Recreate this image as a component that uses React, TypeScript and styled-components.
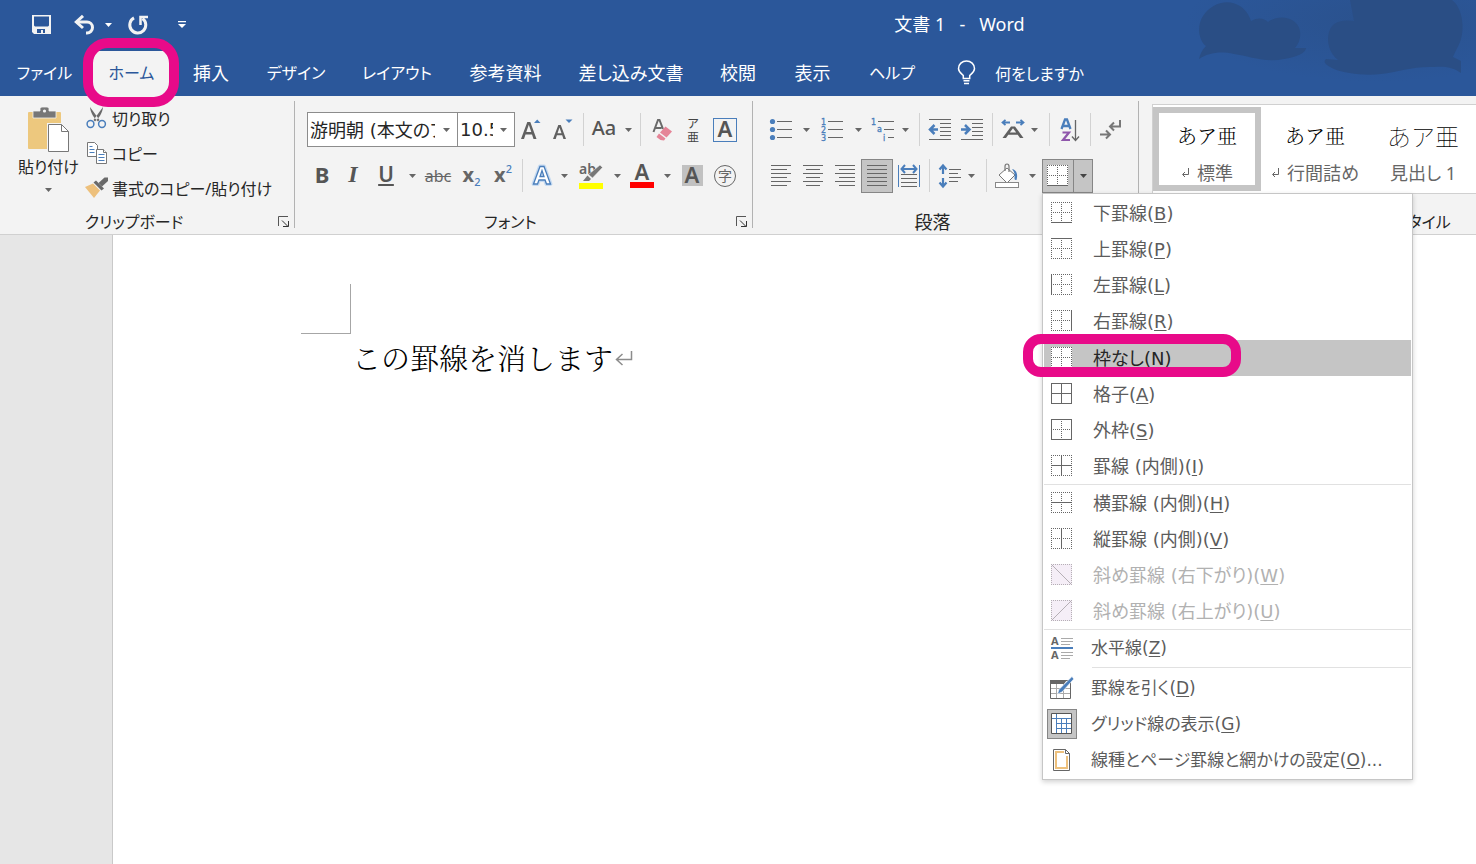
import React from "react";
import styled, { createGlobalStyle, css } from "styled-components";

const BLUE = "#2b579a";
const PINK = "#e80a89";
const ACCENT = "#4a7ebb";
const INK = "#666";

const Global = createGlobalStyle`
  * { box-sizing: border-box; }
  html, body, #root { height: 100%; }
  body {
    margin: 0;
    overflow: hidden;
    background: #fff;
    font-family: "Noto Sans", "Noto Sans CJK JP", sans-serif;
    font-size: 18px;
    font-feature-settings: "palt";
    color: #262626;
  }
  button, input {
    font: inherit;
    font-feature-settings: inherit;
    color: inherit;
    background: none;
    border: 0;
    padding: 0;
    margin: 0;
  }
  svg { display: block; flex: none; overflow: visible; }
`;

const Shell = styled.div`
  min-height: 100%;
  display: flex;
  flex-direction: column;
  overflow: hidden;
`;

/* ---------- header ---------- */

const Header = styled.header`
  position: relative;
  z-index: 2;
  background: ${BLUE};
  color: #fff;
`;

const Clouds = styled.svg`
  position: absolute;
  top: 0;
  right: 0;
  overflow: hidden;
`;

const TitleBar = styled.div`
  display: flex;
  align-items: center;
  height: 49px;
`;

const QuickAccess = styled.div`
  display: flex;
  align-items: center;
  padding-left: 17px;
  width: 200px;
`;

const Title = styled.h1`
  flex: 1;
  margin: 0;
  padding: 0 0 2px 243px;
  text-align: center;
  font-size: 18px;
  font-weight: 400;
  line-height: 24px;
  white-space: pre;
`;

const Tabs = styled.nav`
  position: relative;
  display: flex;
  align-items: flex-end;
  height: 47px;
`;

const Ring = styled.span<{ $radius: number }>`
  position: absolute;
  border: 10px solid ${PINK};
  border-radius: ${(p) => p.$radius}px;
  pointer-events: none;
`;

const Tab = styled.button<{ $w: number; $kana?: boolean; $active?: boolean }>`
  position: relative;
  width: ${(p) => p.$w}px;
  height: 45px;
  padding-bottom: 3px;
  font-size: ${(p) => (p.$kana ? 16 : 18)}px;
  text-align: center;
  white-space: nowrap;
  ${(p) =>
    p.$active &&
    css`
      background: #f3f3f3;
      color: ${BLUE};
    `}
  ${Ring} {
    inset: -13px -5px -11px -6px;
  }
`;

const TellMe = styled.button`
  display: flex;
  align-items: center;
  gap: 19px;
  height: 45px;
  padding: 0 0 2px 23px;
  font-size: 16px;
  white-space: nowrap;
`;

/* ---------- ribbon ---------- */

const Ribbon = styled.section`
  display: flex;
  position: relative;
  z-index: 1;
  height: 139px;
  background: #f3f3f3;
  border-bottom: 1px solid #d0d0d0;
`;

const Group = styled.div<{ $w: number }>`
  flex: 0 0 ${(p) => p.$w}px;
  display: flex;
  flex-direction: column;
`;

const GroupBody = styled.div`
  padding: 16px 0 0 12px;
`;

const GroupRule = styled.div`
  flex: none;
  width: 1px;
  margin: 5px 0 6px;
  background: #b2b2b2;
`;

const GroupFooter = styled.div`
  display: flex;
  align-items: center;
  height: 24px;
  margin-top: auto;
`;

const GroupName = styled.span<{ $kana?: boolean }>`
  flex: 1;
  text-align: center;
  font-size: ${(p) => (p.$kana ? 16 : 18)}px;
  line-height: 24px;
`;

const Launcher = styled.button`
  display: flex;
  width: 26px;
  padding-left: 10px;
`;

const ToolRow = styled.div`
  display: flex;
  align-items: center;
  height: 35px;
  & + & {
    margin-top: 11px;
  }
`;

const Tool = styled.button<{ $w: number; $on?: boolean }>`
  flex: none;
  display: flex;
  align-items: center;
  justify-content: center;
  width: ${(p) => p.$w}px;
  height: 34px;
  color: ${INK};
  ${(p) =>
    p.$on &&
    css`
      background: #c5c5c5;
      border: 1px solid #868686;
    `}
`;

const Sep = styled.span<{ $before?: number }>`
  flex: none;
  width: 1px;
  height: 33px;
  margin: 0 4px 0 ${(p) => p.$before ?? 4}px;
  background: #d2d2d2;
`;

const Glyph = styled.span<{ $size: number; $serif?: boolean; $weight?: number }>`
  font-family: ${(p) => (p.$serif ? '"Liberation Serif", serif' : '"Noto Sans", sans-serif')};
  font-size: ${(p) => p.$size}px;
  font-weight: ${(p) => p.$weight ?? 600};
  font-style: ${(p) => (p.$serif ? "italic" : "normal")};
  line-height: 1;
  padding-bottom: 3px;
  color: #555;
`;

const Combo = styled.div<{ $w: number; $joined?: boolean }>`
  display: flex;
  align-items: center;
  width: ${(p) => p.$w}px;
  height: 35px;
  background: #fff;
  border: 1px solid #8c8c8c;
  border-left-width: ${(p) => (p.$joined ? 0 : 1)}px;
`;

const ComboInput = styled.input`
  flex: 1;
  min-width: 0;
  padding: 0 0 1px 2px;
  font-family: "DejaVu Sans", "Noto Sans CJK JP", sans-serif;
  outline: none;
`;

const PasteArea = styled.div`
  display: flex;
  padding: 4px 0 0 3px;
`;

const PasteButton = styled.button`
  display: flex;
  flex-direction: column;
  align-items: center;
  width: 83px;
  padding: 7px 0 0 8px;
  font-size: 16px;
  line-height: 28px;
`;

const PasteCaret = styled.span`
  padding-top: 7px;
`;

const ClipList = styled.div`
  display: flex;
  flex-direction: column;
`;

const ClipButton = styled.button`
  display: flex;
  align-items: center;
  gap: 5px;
  height: 35px;
  font-size: 16px;
  white-space: nowrap;
`;

/* ---------- styles gallery ---------- */

const Gallery = styled.div`
  display: flex;
  align-items: center;
  height: 90px;
  margin: 8px 0 0 13px;
  background: #fff;
  border: 1px solid #d0d0d0;
`;

const StyleCard = styled.button<{ $on?: boolean }>`
  width: 108px;
  height: 84px;
  border: 6px solid ${(p) => (p.$on ? "#c5c5c5" : "transparent")};
  display: flex;
  flex-direction: column;
  align-items: center;
  white-space: nowrap;
`;

const Sample = styled.span<{ $heading?: boolean }>`
  font-family: ${(p) => (p.$heading ? '"Noto Sans CJK JP", sans-serif' : '"Noto Serif CJK JP", "Noto Sans CJK JP", serif')};
  font-weight: ${(p) => (p.$heading ? 100 : 300)};
  font-feature-settings: normal;
  font-size: ${(p) => (p.$heading ? 24 : 20)}px;
  line-height: 24px;
  margin-top: 11px;
  color: #000;
`;

const StyleName = styled.span`
  display: flex;
  align-items: center;
  gap: 7px;
  margin-top: 13px;
  line-height: 24px;
  color: #666;
`;

/* ---------- borders menu ---------- */

const Split = styled.div`
  position: relative;
  display: flex;
`;

const SplitCaret = styled(Tool)`
  border-left: 0;
`;

const Menu = styled.div`
  position: absolute;
  top: 100%;
  left: 0;
  width: 371px;
  padding: 1px;
  background: #fff;
  border: 1px solid #c6c6c6;
  box-shadow: 0 2px 5px rgba(0, 0, 0, 0.18);
  font-family: "DejaVu Sans", "Noto Sans CJK JP", sans-serif;
`;

const MenuItem = styled.button<{ $hot?: boolean; $off?: boolean; $command?: boolean }>`
  position: relative;
  display: flex;
  align-items: center;
  gap: ${(p) => (p.$command ? 14 : 16)}px;
  width: 100%;
  height: 36px;
  padding-left: 3px;
  font-size: ${(p) => (p.$command ? 17 : 18)}px;
  text-align: left;
  white-space: nowrap;
  color: ${(p) => (p.$off ? "#b1b1b1" : "#5c5c5c")};
  ${(p) =>
    p.$hot &&
    css`
      background: #c5c5c5;
      color: #262626;
      margin-top: 1px;
    `}
  u {
    text-decoration-thickness: 1px;
    text-underline-offset: 2px;
  }
  ${Ring} {
    left: -21px;
    top: -6px;
    width: 218px;
    height: 43px;
  }
`;

const MenuText = styled.span`
  padding-bottom: 2px;
`;

const MenuIcon = styled.span<{ $on?: boolean }>`
  flex: none;
  display: flex;
  align-items: center;
  justify-content: center;
  width: 30px;
  height: 30px;
  ${(p) =>
    p.$on &&
    css`
      background: #c5c5c5;
      border: 1px solid #868686;
    `}
`;

const MenuRule = styled.div<{ $short?: boolean }>`
  height: 1px;
  margin: ${(p) => (p.$short ? "1px 0 2px 48px" : "0")};
  background: #e1e1e1;
`;

/* ---------- document ---------- */

const Workspace = styled.main`
  flex: 1;
  display: flex;
  background: #e6e6e6;
  padding-left: 112px;
`;

const Page = styled.article`
  flex: 1;
  background: #fff;
  border-left: 1px solid #c9c9c9;
  padding: 49px 0 0 188px;
`;

const CropMark = styled.div`
  width: 50px;
  height: 50px;
  border: solid #a6a6a6;
  border-width: 0 1px 1px 0;
`;

const Paragraph = styled.p`
  display: flex;
  align-items: center;
  gap: 2px;
  margin: 3px 0 0 51px;
  font-family: "Noto Serif CJK JP", "Noto Sans CJK JP", serif;
  font-weight: 300;
  font-feature-settings: normal;
  font-size: 29px;
  line-height: 42px;
  color: #000;
`;

/* ---------- drawings ---------- */

const Caret = ({ color = INK }: { color?: string }) => (
  <svg width="7" height="4" viewBox="0 0 7 4">
    <path d="M0 0h7L3.500 4z" fill={color} />
  </svg>
);

const LauncherIcon = () => (
  <svg width="12" height="12" viewBox="0 0 12 12" fill="none" stroke="#555">
    <path d="M.5 10V.5H10" />
    <path d="M4 4.500l6 6M10.500 5v5.500H5" stroke="#333" />
  </svg>
);

const SaveIcon = () => (
  <svg width="19" height="19" viewBox="0 0 19 19">
    <path fillRule="evenodd" fill="#f3f3f3" d="M0 0h19v19H2L0 17zM2 1.500v9l1 1h13l1-1v-9zM5 14v4h4v-3h2v3h2v-4z" />
  </svg>
);

const UndoIcon = () => (
  <svg width="22" height="20" viewBox="0 0 22 20" fill="none" stroke="#f3f3f3">
    <path d="M2 7h11a5.500 5.500 0 0 1 0 11h-1" strokeWidth="3" />
    <path d="M9 .8L2.300 7 9 13" strokeWidth="3" />
  </svg>
);

const RedoIcon = () => (
  <svg width="20" height="20" viewBox="0 0 20 20" fill="none" stroke="#f3f3f3" strokeWidth="3">
    <path d="M6 2.900A8 8 0 1 0 14.500 3.500" />
    <path d="M12.500 10V2H20" strokeWidth="2.500" />
  </svg>
);

const CustomizeIcon = () => (
  <svg width="8" height="8" viewBox="0 0 8 8" fill="#fff">
    <path d="M0 0h8v1.300H0zM0 3h8L4 7z" />
  </svg>
);

const BulbIcon = () => (
  <svg width="19" height="26" viewBox="0 0 19 26" fill="none" stroke="#fff" strokeWidth="1.500">
    <path d="M6.300 18.500v-3C4 13.500 1.500 12 1.500 8.500a8 7.600 0 0 1 16 0c0 3.500-2.500 5-4.800 7v3z" />
    <path d="M6.500 20.800h6M7 23.500h5" />
  </svg>
);

const PasteIcon = () => (
  <svg width="42" height="46" viewBox="0 0 42 46">
    <rect x="0" y="5" width="33" height="37" rx="1" fill="#edc87e" />
    <path d="M5 4h7V1.500L13.500 0h6L21 1.500V4h7v7H5z" fill="#777" stroke="#f3f3f3" strokeWidth=".8" />
    <circle cx="16.500" cy="4" r="1.600" fill="#f3f3f3" />
    <path d="M19 16h16l7 7v23H19z" fill="#f3f3f3" />
    <path d="M20.500 17.500h13l7 7v20h-20z" fill="#fff" stroke="#777" />
    <path d="M33.500 17.500v7h7" fill="none" stroke="#777" />
  </svg>
);

const CutIcon = () => (
  <svg width="21" height="22" viewBox="0 0 21 22">
    <path d="M4 0l9.500 13-1.500 1.500C8 11 4.500 6 4 0zM17 0L7.500 13 9 14.500C13 11 16.500 6 17 0z" fill="#6a6a6a" />
    <circle cx="4.500" cy="17" r="3.400" fill="none" stroke={ACCENT} strokeWidth="1.500" />
    <circle cx="16" cy="17" r="3.400" fill="none" stroke={ACCENT} strokeWidth="1.500" />
  </svg>
);

const CopyIcon = () => (
  <svg width="21" height="22" viewBox="0 0 21 22" fill="#fff" stroke="#777">
    <path d="M1.500.5h7l3 3v11h-10z" />
    <path d="M3.500 4.500h3M3.500 7.500h5M3.500 10.500h5" stroke={ACCENT} />
    <path d="M10.500 7.500h7l3 3v11h-10z" />
    <path d="M17.500 7.500v3h3" />
    <path d="M12.500 12.500h6M12.500 15.500h6M12.500 18.500h6" stroke={ACCENT} />
  </svg>
);

const PainterIcon = () => (
  <svg width="21" height="22" viewBox="0 0 21 22">
    <path d="M-1 10l8-3.500 7 7-6 7.500z" fill="#edc07c" />
    <path d="M7.500 5.500l2.500-2 8 8-2.500 2z" fill="#6a6a6a" />
    <path d="M12.500 6L18.500.5 22 .5V4l-6 5.500z" fill="#6a6a6a" />
  </svg>
);

const SizeIcon = ({ up }: { up?: boolean }) => (
  <svg width="20" height="22" viewBox="0 0 20 22">
    <path
      fill="#606060"
      fillRule="evenodd"
      d={
        up
          ? "M0 20L6.300 3h3L15.500 20h-3L11 15.500H4.500L3 20zM5.300 13h5L7.800 5.800z"
          : "M0 20L5.300 6h2.500L13 20h-2.600L9.200 16.300H3.900L2.700 20zM4.500 14.200h4L6.500 8.500z"
      }
    />
    <path fill={ACCENT} d={up ? "M13 4L16.200.5 19.500 4z" : "M12.500.5h7L16 4z"} />
  </svg>
);

const EraserIcon = () => (
  <svg width="20" height="22" viewBox="0 0 20 22">
    <path d="M1.500 13L6 1h1.500l3.500 9M3.500 9h6" fill="none" stroke="#6a6a6a" strokeWidth="2" />
    <path d="M13.500 7.500l6.500 5-5.500 6-6.500-5z" fill="#e58497" />
    <path d="M7 14.500l6.500 5-1.500 2-3.500-.5-4-3z" fill="#e58497" />
  </svg>
);

const RubyStack = styled.span`
  display: flex;
  flex-direction: column;
  align-items: center;
  font-family: "Noto Sans CJK JP", sans-serif;
  font-size: 12px;
  line-height: 14px;
  font-feature-settings: normal;
  color: #444;
`;

const BoxedA = styled.span`
  display: flex;
  align-items: center;
  justify-content: center;
  width: 24px;
  height: 24px;
  border: 1px solid ${ACCENT};
`;

const ShadedA = styled(BoxedA)`
  width: 21px;
  height: 21px;
  border: 0;
  background: #c1c1c1;
`;

const CircledChar = styled.span`
  width: 22px;
  height: 22px;
  border: 1px solid #666;
  border-radius: 50%;
  font-size: 14px;
  line-height: 20px;
  text-align: center;
`;

const OutlineA = () => (
  <svg width="22" height="24" viewBox="0 0 22 24">
    <path
      d="M2.500 20L9 2.500h4L19.500 20h-4L14 16H8l-1.500 4zM9 12.500h4L11 6.500z"
      fill="#fff"
      stroke="#c5daf1"
      strokeWidth="4"
      strokeLinejoin="round"
    />
    <path d="M2.500 20L9 2.500h4L19.500 20h-4L14 16H8l-1.500 4zM9 12.500h4L11 6.500z" fill="#fff" stroke={ACCENT} strokeWidth="1.300" />
  </svg>
);

const UnderBar = styled.span<{ $color: string }>`
  display: flex;
  flex-direction: column;
  align-items: center;
  justify-content: flex-end;
  width: 24px;
  height: 24px;
  border-bottom: 6px solid ${(p) => p.$color};
  ${Glyph} {
    padding-bottom: 0;
  }
`;

const HighlightIcon = () => (
  <svg width="26" height="26" viewBox="0 0 26 26">
    <text x="1" y="11" fontFamily="Noto Sans" fontSize="14" fontWeight="600" fill="#666">ab</text>
    <path d="M22 2l2.500 2.500L14.500 15l-4-3.500z" fill="#777" stroke="#f3f3f3" strokeWidth=".5" />
    <path d="M9.500 12.500l3.500 3.500-2 2H5z" fill="#777" />
    <path d="M1 20h24v6H1z" fill="#ff0" />
  </svg>
);

const Strike = styled.span`
  font-size: 16px;
  line-height: 20px;
  text-decoration: line-through;
`;

const Script = styled.span<{ $up?: boolean }>`
  display: flex;
  align-items: ${(p) => (p.$up ? "flex-start" : "flex-end")};
  height: 26px;
  padding-bottom: 2px;
  font-weight: 700;
  font-size: 20px;
  line-height: 24px;
  small {
    font-size: 11px;
    line-height: 11px;
    font-weight: 500;
    color: ${ACCENT};
  }
`;

type Line = [number, number, number];
const Lines = ({ w = 22, h = 22, lines, children }: { w?: number; h?: number; lines: Line[]; children?: React.ReactNode }) => (
  <svg width={w} height={h} viewBox={`0 0 ${w} ${h}`}>
    {lines.map(([x, y, len]) => (
      <path key={`${x}-${y}`} d={`M${x} ${y + 0.5}h${len}`} stroke="#666" />
    ))}
    {children}
  </svg>
);

const Digit = ({ x, y, children }: { x: number; y: number; children: string }) => (
  <text x={x} y={y} fontFamily="DejaVu Sans" fontSize="8" fontWeight="500" fill={ACCENT} stroke={ACCENT} strokeWidth=".3">
    {children}
  </text>
);

const BulletIcon = () => (
  <Lines w={24} lines={[[8, 2, 15], [8, 10, 15], [8, 18, 15]]}>
    <g fill={ACCENT}>
      <circle cx="3.500" cy="2.500" r="2.600" />
      <circle cx="3.500" cy="10.500" r="2.600" />
      <circle cx="3.500" cy="18.500" r="2.600" />
    </g>
  </Lines>
);

const NumberIcon = () => (
  <Lines w={24} h={24} lines={[[8, 3, 15], [8, 11, 15], [8, 19, 15]]}>
    <Digit x={1} y={7}>1</Digit>
    <Digit x={1} y={15}>2</Digit>
    <Digit x={1} y={23}>3</Digit>
  </Lines>
);

const LevelIcon = () => (
  <Lines w={24} h={24} lines={[[7, 3, 16], [13, 11, 10], [17, 19, 6]]}>
    <Digit x={0} y={7}>1</Digit>
    <Digit x={6} y={14}>a</Digit>
    <Digit x={12} y={23}>i</Digit>
  </Lines>
);

const IndentIcon = ({ right }: { right?: boolean }) => (
  <Lines lines={[[0, 0, 22], [11, 4, 11], [11, 8, 11], [11, 12, 11], [11, 16, 11], [0, 20, 22]]}>
    <path
      d={right ? "M0 10.500h7M4 6l4.500 4.500L4 15" : "M9 10.500H2M5.500 6L1 10.500 5.500 15"}
      fill="none"
      stroke={ACCENT}
      strokeWidth="2.500"
    />
  </Lines>
);

const alignLines = (kind: "left" | "center" | "right" | "full"): Line[] =>
  [0, 4, 8, 12, 16, 20].map((y, i) => {
    if (kind === "full" || i % 2 === 0) return [1, y, 20] as Line;
    const x = kind === "left" ? 1 : kind === "center" ? 4 : 5;
    return [x, y, kind === "center" ? 14 : 16] as Line;
  });

const DistributeIcon = () => (
  <Lines w={22} h={24} lines={[[3, 10, 16], [3, 14, 16], [3, 18, 16], [3, 22, 16]]}>
    <path d="M.5 1v22M21.500 1v22" stroke={ACCENT} />
    <path d="M4 5h14M7 1L3.500 5 7 9M15 1l3.500 4L15 9" fill="none" stroke={ACCENT} strokeWidth="2" />
  </Lines>
);

const SpacingIcon = () => (
  <Lines w={24} h={24} lines={[[11, 5, 12], [11, 9, 9], [11, 13, 12], [11, 17, 9]]}>
    <path d="M5 2v8M1.500 5.500L5 1.500l3.500 4M5 14v8M1.500 18.500l3.500 4 3.500-4" fill="none" stroke={ACCENT} strokeWidth="2.200" />
  </Lines>
);

const StretchIcon = () => (
  <svg width="24" height="22" viewBox="0 0 24 22" fill="none">
    <path d="M9 3.500H2M4.500 .8L1.500 3.500l3 2.700M15 3.500h7M19.500 .8l3 2.700-3 2.700" stroke={ACCENT} strokeWidth="1.800" />
    <path fill="#606060" fillRule="evenodd" d="M1.500 19L10 7.500h4L22.500 19H19l-2.300-3.200H7.300L5 19zM8.800 13.600h6.400L12 9.300z" />
  </svg>
);

const SortIcon = () => (
  <svg width="20" height="24" viewBox="0 0 20 24" fill="none">
    <path d="M1.500 11L5 1.500h2L10.500 11M3 8h6" stroke={ACCENT} strokeWidth="2.300" />
    <path d="M2.500 14.500H9L3 22h7" stroke="#8f56ab" strokeWidth="2.200" />
    <path d="M15.500 2v20M12 18.500l3.500 4 3.500-4" stroke="#666" strokeWidth="1.300" />
  </svg>
);

const MarksIcon = () => (
  <svg width="22" height="20" viewBox="0 0 22 20" fill="none" stroke="#777" strokeWidth="2">
    <path d="M20 0v6.500h-9M14 2.500L10 6.500l4 4M0 14.500h9M6 10.500l4 4-4 4" />
  </svg>
);

const BucketIcon = () => (
  <svg width="25" height="25" viewBox="0 0 25 25" fill="none">
    <path d="M12 5l8 7-8 8-8-8z" fill="#fff" stroke="#777" />
    <path d="M10 8V3.500Q10 1 12 1t2 2.500V9" stroke="#777" strokeWidth="1.200" />
    <path d="M17 6c5 1 6 6 4.500 11-2 .5-2-1-2-3 1-3-1-6-2.500-8z" fill={ACCENT} />
    <rect x=".5" y="19.500" width="23" height="5" fill="#fff" stroke="#888" />
  </svg>
);

type Edges = { t?: boolean; r?: boolean; b?: boolean; l?: boolean; h?: boolean; v?: boolean; diag?: "down" | "up" };
const BorderIcon = ({ t, r, b, l, h, v, diag }: Edges) => {
  const color = diag ? "#b5afb5" : "#666";
  const dash = (solid?: boolean) => (solid ? undefined : "1 1");
  return (
    <svg width="22" height="22" viewBox="0 0 22 22" fill="none" stroke={color}>
      <rect width="21" height="21" fill={diag ? "#f5eef7" : "#fff"} stroke="none" />
      <path d="M0 .5h21" strokeDasharray={dash(t)} />
      <path d="M0 20.500h21" strokeDasharray={dash(b)} />
      <path d="M.5 0v21" strokeDasharray={dash(l)} />
      <path d="M20.500 0v21" strokeDasharray={dash(r)} />
      {!diag && <path d="M0 10.500h21" strokeDasharray={dash(h)} />}
      {!diag && <path d="M10.500 0v21" strokeDasharray={dash(v)} />}
      {diag && <path d={diag === "down" ? "M1 1l19 19" : "M1 20L20 1"} />}
    </svg>
  );
};

const RuleIcon = () => (
  <svg width="24" height="24" viewBox="0 0 24 24">
    <g fontFamily="Noto Sans" fontSize="11" fontWeight="700" fill="#666">
      <text x="1" y="9">A</text>
      <text x="1" y="23">A</text>
    </g>
    <path d="M11 2.500h12M11 5.500h12M11 8.500h9M11 16.500h12M11 19.500h12M11 22.500h9" stroke="#aaa" />
    <path d="M1 12h22" stroke={ACCENT} strokeWidth="2" />
  </svg>
);

const DrawTableIcon = () => (
  <svg width="24" height="24" viewBox="0 0 24 24" fill="none">
    <path d="M.5 4.500h20v18H.5z" fill="#fff" stroke="#666" />
    <path d="M0 4h17l-3 4H0z" fill="#666" />
    <path d="M1 12.500h19M1 17.500h19M6.500 8v14M13.500 8v14" stroke="#aaa" />
    <path d="M22 .5L23.800 3 12 16l-4.500 2 1.500-4.500z" fill={ACCENT} stroke="#fff" strokeWidth=".6" />
  </svg>
);

const GridlineIcon = () => (
  <svg width="22" height="22" viewBox="0 0 22 22">
    <path d="M.5.5h20v20H.5z" fill="#fff" stroke="#555" />
    <path d="M1 5.500h19M5.500 1v19M6 10.500h14M6 15.500h14M10.500 6v14M15.500 6v14" stroke={ACCENT} />
  </svg>
);

const PageBorderIcon = () => (
  <svg width="18" height="22" viewBox="0 0 18 22" fill="none">
    <path d="M.5.5h12l4 4v17H.5z" fill="#fff" stroke="#666" />
    <path d="M11 3H3v16h11V7" stroke="#edc07c" strokeWidth="2" />
    <path d="M12.500.5v4h4" stroke="#666" />
  </svg>
);

const StyleReturn = () => (
  <svg width="9" height="10" viewBox="0 0 9 10" fill="none" stroke="#666">
    <path d="M7.500 0v6.500H2M4 4L1.500 6.500 4 9" />
  </svg>
);

const ReturnMark = () => (
  <svg width="18" height="16" viewBox="0 0 18 16" fill="none" stroke="#8c8c8c" strokeWidth="1.500">
    <path d="M16.500 1v8.500H2M7.500 4L1.500 9.500l6 5.500" />
  </svg>
);

/* ---------- data ---------- */

const tabs: { label: string; w: number; kana?: boolean; active?: boolean }[] = [
  { label: "ファイル", w: 89, kana: true },
  { label: "ホーム", w: 85, kana: true, active: true },
  { label: "挿入", w: 74 },
  { label: "デザイン", w: 96, kana: true },
  { label: "レイアウト", w: 106, kana: true },
  { label: "参考資料", w: 111 },
  { label: "差し込み文書", w: 140 },
  { label: "校閲", w: 74 },
  { label: "表示", w: 75 },
  { label: "ヘルプ", w: 84, kana: true },
];

type Entry = { label: string; k: string; edges: Edges; hot?: boolean };
const borderItems: Entry[] = [
  { label: "下罫線", k: "B", edges: { b: true } },
  { label: "上罫線", k: "P", edges: { t: true } },
  { label: "左罫線", k: "L", edges: { l: true } },
  { label: "右罫線", k: "R", edges: { r: true } },
  { label: "枠なし", k: "N", edges: {}, hot: true },
  { label: "格子", k: "A", edges: { t: true, r: true, b: true, l: true, h: true, v: true } },
  { label: "外枠", k: "S", edges: { t: true, r: true, b: true, l: true } },
  { label: "罫線 (内側)", k: "I", edges: { h: true, v: true } },
];
const innerItems: Entry[] = [
  { label: "横罫線 (内側)", k: "H", edges: { h: true } },
  { label: "縦罫線 (内側)", k: "V", edges: { v: true } },
  { label: "斜め罫線 (右下がり)", k: "W", edges: { diag: "down" } },
  { label: "斜め罫線 (右上がり)", k: "U", edges: { diag: "up" } },
];

const Label = ({ text, k, more }: { text: string; k: string; more?: boolean }) => (
  <MenuText>
    {text}(<u>{k}</u>){more && "..."}
  </MenuText>
);

const BorderEntry = ({ label, k, edges, hot }: Entry) => (
  <MenuItem role="menuitem" $hot={hot} $off={!!edges.diag} disabled={!!edges.diag}>
    <MenuIcon>
      <BorderIcon {...edges} />
    </MenuIcon>
    <Label text={label} k={k} />
    {hot && <Ring $radius={18} />}
  </MenuItem>
);

const Footer = ({ name, kana }: { name: string; kana?: boolean }) => (
  <GroupFooter>
    <GroupName $kana={kana}>{name}</GroupName>
    <Launcher aria-label={`${name}の詳細`}>
      <LauncherIcon />
    </Launcher>
  </GroupFooter>
);

const Drop = ({ w, name }: { w: number; name: string }) => (
  <Tool $w={w} aria-label={`${name}のオプション`}>
    <Caret />
  </Tool>
);

export default function App() {
  return (
    <Shell>
      <Global />
      <Header>
        <Clouds width="300" height="96" viewBox="0 0 300 96" aria-hidden="true">
          <defs>
            <radialGradient id="haze">
              <stop offset="0" stopColor="#2a4e85" stopOpacity=".6" />
              <stop offset="1" stopColor="#2a4e85" stopOpacity="0" />
            </radialGradient>
          </defs>
          <ellipse cx="200" cy="20" rx="190" ry="62" fill="url(#haze)" />
          <g fill="#2a4e85">
            <path d="M23 59C24 54 26 50 30 46C22 40 21 25 27 16C35 3 52-2 64 6C70 10 73 15 75 21C82 17 88 18 92 22C104 13 122 18 124 31C125 38 123 43 119 48L130 48C130 53 120 57 108 59C90 63 72 56 58 54C44 51 32 53 23 59z" />
            <path d="M170 0H276C287 8 289 30 284 42C281 49 278 54 277 57L285 61L285 73C277 67 268 66 258 67C238 66 222 72 205 74C188 76 168 73 158 69C151 66 146 62 150 59L162 60C154 54 150 42 153 32C156 22 165 19 178 21L174 0z" />
          </g>
        </Clouds>
        <TitleBar>
          <QuickAccess>
            <Tool $w={48} aria-label="上書き保存"><SaveIcon /></Tool>
            <Tool $w={40} aria-label="元に戻す"><UndoIcon /></Tool>
            <Tool $w={6} aria-label="元に戻すの履歴"><Caret color="#fff" /></Tool>
            <Tool $w={54} aria-label="繰り返し"><RedoIcon /></Tool>
            <Tool $w={33} aria-label="クイック アクセスのカスタマイズ"><CustomizeIcon /></Tool>
          </QuickAccess>
          <Title>文書 1   -   Word</Title>
        </TitleBar>
        <Tabs>
          {tabs.map((t) => (
            <Tab key={t.label} $w={t.w} $kana={t.kana} $active={t.active}>
              {t.label}
              {t.active && <Ring $radius={25} />}
            </Tab>
          ))}
          <TellMe>
            <BulbIcon />
            何をしますか
          </TellMe>
        </Tabs>
      </Header>

      <Ribbon>
        <Group $w={294}>
          <PasteArea>
            <PasteButton>
              <PasteIcon />
              <span>貼り付け</span>
              <PasteCaret><Caret /></PasteCaret>
            </PasteButton>
            <ClipList>
              <ClipButton><CutIcon />切り取り</ClipButton>
              <ClipButton><CopyIcon />コピー</ClipButton>
              <ClipButton><PainterIcon />書式のコピー/貼り付け</ClipButton>
            </ClipList>
          </PasteArea>
          <Footer name="クリップボード" kana />
        </Group>
        <GroupRule />

        <Group $w={457}>
          <GroupBody>
            <ToolRow>
              <Combo $w={151}>
                <ComboInput aria-label="フォント名" defaultValue="游明朝 (本文のフォント)" />
                <Drop w={22} name="フォント名" />
              </Combo>
              <Combo $w={57} $joined>
                <ComboInput aria-label="フォント サイズ" defaultValue="10.5" />
                <Drop w={21} name="フォント サイズ" />
              </Combo>
              <Tool $w={32} aria-label="フォント サイズの拡大"><SizeIcon up /></Tool>
              <Tool $w={32} aria-label="フォント サイズの縮小"><SizeIcon /></Tool>
              <Sep />
              <Tool $w={32} aria-label="文字種の変換"><Glyph $size={20} $weight={500}>Aa</Glyph></Tool>
              <Drop w={16} name="文字種の変換" />
              <Sep />
              <Tool $w={34} aria-label="書式のクリア"><EraserIcon /></Tool>
              <Tool $w={28} aria-label="ルビ"><RubyStack><span>ア</span><span>亜</span></RubyStack></Tool>
              <Tool $w={36} aria-label="囲み線"><BoxedA><Glyph $size={22}>A</Glyph></BoxedA></Tool>
            </ToolRow>
            <ToolRow>
              <Tool $w={30} aria-label="太字"><Glyph $size={22} $weight={700}>B</Glyph></Tool>
              <Tool $w={32} aria-label="斜体"><Glyph $size={24} $serif>I</Glyph></Tool>
              <Tool $w={34} aria-label="下線"><Glyph $size={21}><u>U</u></Glyph></Tool>
              <Drop w={18} name="下線" />
              <Tool $w={34} aria-label="取り消し線"><Strike>abc</Strike></Tool>
              <Tool $w={33} aria-label="下付き"><Script>x<small>2</small></Script></Tool>
              <Tool $w={30} aria-label="上付き"><Script $up>x<small>2</small></Script></Tool>
              <Sep />
              <Tool $w={30} aria-label="文字の効果"><OutlineA /></Tool>
              <Drop w={14} name="文字の効果" />
              <Tool $w={40} aria-label="蛍光ペン"><HighlightIcon /></Tool>
              <Drop w={12} name="蛍光ペン" />
              <Tool $w={38} aria-label="フォントの色"><UnderBar $color="#f00"><Glyph $size={22}>A</Glyph></UnderBar></Tool>
              <Drop w={12} name="フォントの色" />
              <Tool $w={38} aria-label="文字の網かけ"><ShadedA><Glyph $size={22}>A</Glyph></ShadedA></Tool>
              <Tool $w={28} aria-label="囲い文字"><CircledChar>字</CircledChar></Tool>
            </ToolRow>
          </GroupBody>
          <Footer name="フォント" kana />
        </Group>
        <GroupRule />

        <Group $w={385}>
          <GroupBody>
            <ToolRow>
              <Tool $w={32} aria-label="箇条書き"><BulletIcon /></Tool>
              <Drop w={18} name="箇条書き" />
              <Tool $w={34} aria-label="段落番号"><NumberIcon /></Tool>
              <Drop w={18} name="段落番号" />
              <Tool $w={32} aria-label="アウトライン"><LevelIcon /></Tool>
              <Drop w={12} name="アウトライン" />
              <Sep $before={8} />
              <Tool $w={32} aria-label="インデントを減らす"><IndentIcon /></Tool>
              <Tool $w={32} aria-label="インデントを増やす"><IndentIcon right /></Tool>
              <Sep />
              <Tool $w={32} aria-label="拡張書式"><StretchIcon /></Tool>
              <Drop w={10} name="拡張書式" />
              <Sep $before={10} />
              <Tool $w={32} aria-label="並べ替え"><SortIcon /></Tool>
              <Sep />
              <Tool $w={32} aria-label="編集記号の表示"><MarksIcon /></Tool>
            </ToolRow>
            <ToolRow>
              <Tool $w={32} aria-label="左揃え"><Lines lines={alignLines("left")} /></Tool>
              <Tool $w={32} aria-label="中央揃え"><Lines lines={alignLines("center")} /></Tool>
              <Tool $w={32} aria-label="右揃え"><Lines lines={alignLines("right")} /></Tool>
              <Tool $w={32} $on aria-label="両端揃え"><Lines lines={alignLines("full")} /></Tool>
              <Tool $w={32} aria-label="均等割り付け"><DistributeIcon /></Tool>
              <Sep />
              <Tool $w={32} aria-label="行と段落の間隔"><SpacingIcon /></Tool>
              <Drop w={10} name="行と段落の間隔" />
              <Sep $before={10} />
              <Tool $w={32} aria-label="塗りつぶし"><BucketIcon /></Tool>
              <Drop w={19} name="塗りつぶし" />
              <Split>
                <Tool $w={32} $on aria-label="罫線"><BorderIcon b /></Tool>
                <SplitCaret $w={19} $on aria-label="罫線の種類" aria-expanded="true"><Caret color="#444" /></SplitCaret>
                <Menu role="menu">
                  {borderItems.map((e) => <BorderEntry key={e.k} {...e} />)}
                  <MenuRule />
                  {innerItems.map((e) => <BorderEntry key={e.k} {...e} />)}
                  <MenuRule />
                  <MenuItem role="menuitem" $command>
                    <MenuIcon><RuleIcon /></MenuIcon>
                    <Label text="水平線" k="Z" />
                  </MenuItem>
                  <MenuRule $short />
                  <MenuItem role="menuitem" $command>
                    <MenuIcon><DrawTableIcon /></MenuIcon>
                    <Label text="罫線を引く" k="D" />
                  </MenuItem>
                  <MenuItem role="menuitemcheckbox" aria-checked="true" $command>
                    <MenuIcon $on><GridlineIcon /></MenuIcon>
                    <Label text="グリッド線の表示" k="G" />
                  </MenuItem>
                  <MenuItem role="menuitem" $command>
                    <MenuIcon><PageBorderIcon /></MenuIcon>
                    <Label text="線種とページ罫線と網かけの設定" k="O" more />
                  </MenuItem>
                </Menu>
              </Split>
            </ToolRow>
          </GroupBody>
          <Footer name="段落" />
        </Group>
        <GroupRule />

        <Group $w={592}>
          <Gallery>
            <StyleCard $on>
              <Sample>あア亜</Sample>
              <StyleName><StyleReturn />標準</StyleName>
            </StyleCard>
            <StyleCard>
              <Sample>あア亜</Sample>
              <StyleName><StyleReturn />行間詰め</StyleName>
            </StyleCard>
            <StyleCard>
              <Sample $heading>あア亜</Sample>
              <StyleName>見出し 1</StyleName>
            </StyleCard>
          </Gallery>
          <Footer name="スタイル" kana />
        </Group>
      </Ribbon>

      <Workspace>
        <Page>
          <CropMark />
          <Paragraph>
            この罫線を消します
            <ReturnMark />
          </Paragraph>
        </Page>
      </Workspace>
    </Shell>
  );
}
